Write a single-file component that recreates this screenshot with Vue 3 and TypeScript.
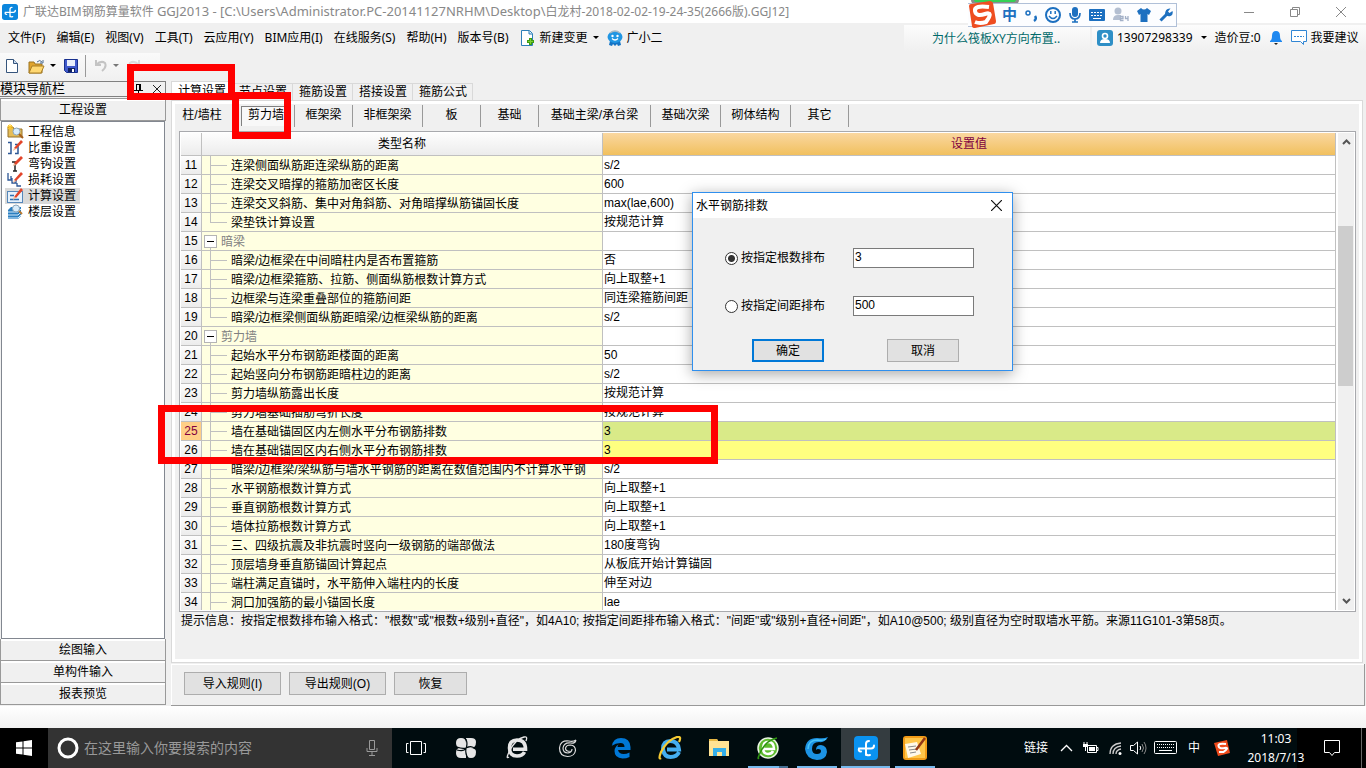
<script setup lang="ts">
import { ref } from 'vue'

interface Row {
  n: number
  name: string
  value: string
  group?: boolean
  last?: boolean
}

const menus = ['文件(F)', '编辑(E)', '视图(V)', '工具(T)', '云应用(Y)', 'BIM应用(I)', '在线服务(S)', '帮助(H)', '版本号(B)']
const navItems = ['工程信息', '比重设置', '弯钩设置', '损耗设置', '计算设置', '楼层设置']
const navSections = ['绘图输入', '单构件输入', '报表预览']
const tabs = ['计算设置', '节点设置', '箍筋设置', '搭接设置', '箍筋公式']
const subTabs = [
  { t: '柱/墙柱', s: 'first' },
  { t: '剪力墙', s: 'pressed' },
  { t: '框架梁', s: 'short' },
  { t: '非框架梁', s: 'mid' },
  { t: '板', s: 'short' },
  { t: '基础', s: 'short' },
  { t: '基础主梁/承台梁', s: 'long' },
  { t: '基础次梁', s: 'mid' },
  { t: '砌体结构', s: 'mid' },
  { t: '其它', s: 'short' },
]
const rows: Row[] = [
  { n: 11, name: '连梁侧面纵筋距连梁纵筋的距离', value: 's/2' },
  { n: 12, name: '连梁交叉暗撑的箍筋加密区长度', value: '600' },
  { n: 13, name: '连梁交叉斜筋、集中对角斜筋、对角暗撑纵筋锚固长度', value: 'max(lae,600)' },
  { n: 14, name: '梁垫铁计算设置', value: '按规范计算', last: true },
  { n: 15, name: '暗梁', value: '', group: true },
  { n: 16, name: '暗梁/边框梁在中间暗柱内是否布置箍筋', value: '否' },
  { n: 17, name: '暗梁/边框梁箍筋、拉筋、侧面纵筋根数计算方式', value: '向上取整+1' },
  { n: 18, name: '边框梁与连梁重叠部位的箍筋间距', value: '同连梁箍筋间距' },
  { n: 19, name: '暗梁/边框梁侧面纵筋距暗梁/边框梁纵筋的距离', value: 's/2', last: true },
  { n: 20, name: '剪力墙', value: '', group: true },
  { n: 21, name: '起始水平分布钢筋距楼面的距离', value: '50' },
  { n: 22, name: '起始竖向分布钢筋距暗柱边的距离', value: 's/2' },
  { n: 23, name: '剪力墙纵筋露出长度', value: '按规范计算' },
  { n: 24, name: '剪力墙基础插筋弯折长度', value: '按规范计算' },
  { n: 25, name: '墙在基础锚固区内左侧水平分布钢筋排数', value: '3' },
  { n: 26, name: '墙在基础锚固区内右侧水平分布钢筋排数', value: '3' },
  { n: 27, name: '暗梁/边框梁/梁纵筋与墙水平钢筋的距离在数值范围内不计算水平钢', value: 's/2' },
  { n: 28, name: '水平钢筋根数计算方式', value: '向上取整+1' },
  { n: 29, name: '垂直钢筋根数计算方式', value: '向上取整+1' },
  { n: 30, name: '墙体拉筋根数计算方式', value: '向上取整+1' },
  { n: 31, name: '三、四级抗震及非抗震时竖向一级钢筋的端部做法', value: '180度弯钩' },
  { n: 32, name: '顶层墙身垂直筋锚固计算起点', value: '从板底开始计算锚固' },
  { n: 33, name: '端柱满足直锚时，水平筋伸入端柱内的长度', value: '伸至对边' },
  { n: 34, name: '洞口加强筋的最小锚固长度', value: 'lae' },
]

const activeNav = ref(4)
const mode = ref('count')
const count = ref('3')
const spacing = ref('500')
const search = ref('')
</script>

<template>
  <div class="app">
    <header class="titlebar">
      <svg class="logo" viewBox="0 0 24 24" width="16" height="16">
        <rect width="24" height="24" rx="4" fill="#0b86dd" />
        <path d="M12 19V8q0-3 3-3M12 12.500h5q3 0 3-3M12 12.500H5q-1 3 2 3M12 17q0 3 4 2" fill="none" stroke="#fff" stroke-width="2" stroke-linecap="round" />
      </svg>
      <span class="title">广联达BIM钢筋算量软件 <span class="path">GGJ2013 - [C:\Users\Administrator.PC-20141127NRHM\Desktop\</span>白龙村-2018-02-02-19-24-35(2666版).GGJ12]</span>
      <div class="winbtns">
        <button aria-label="最小化"><svg width="12" height="12"><path d="M1 6.500h10" stroke="#888" /></svg></button>
        <button aria-label="还原"><svg width="12" height="12"><path d="M1.500 3.500h7v7h-7zM3.500 3V1.500h7v7H9" fill="none" stroke="#888" /></svg></button>
        <button aria-label="关闭"><svg width="12" height="12"><path d="M1 1l10 10M11 1L1 11" stroke="#888" /></svg></button>
      </div>
    </header>

    <nav class="menubar">
      <button v-for="m in menus" :key="m">{{ m }}</button>
      <button class="withicon">
        <svg width="15" height="16"><path d="M1.500.500h8l3 3v12h-11z" fill="#fff" stroke="#2c7fb8" /><path d="M9 1v3h3" fill="#cfe6f7" stroke="#2c7fb8" /><path d="M10.500 8v7M7 11.500h7" stroke="#3e9c10" stroke-width="3" /><path d="M10.500 9v5M8 11.500h5" stroke="#7ccf35" /></svg>
        新建变更
        <svg width="6" height="4"><path d="M0 0h6L3 3z" /></svg>
      </button>
      <button class="withicon helper">
        <svg width="16" height="16"><path d="M3 11l-1 4 3 1 1-2 2 2 2-2 1 2 3-1-1-4" fill="#1473c4" /><ellipse cx="8" cy="7" rx="7.500" ry="6" fill="#2196e3" /><path d="M3 3q5-4 10 0" fill="none" stroke="#a9b9c4" stroke-width="1.500" /><circle cx="5.500" cy="6" r="1.200" fill="#fff" /><circle cx="10.500" cy="6" r="1.200" fill="#fff" /><path d="M5 8.500q3 3 6 0" fill="none" stroke="#fff" stroke-width="1.200" /></svg>
        广小二
      </button>
      <div class="question"><a href="#">为什么筏板XY方向布置..</a></div>
      <div class="account">
        <svg width="16" height="16"><rect width="16" height="16" rx="3" fill="#2e8fc6" /><circle cx="8" cy="6" r="2.500" fill="none" stroke="#fff" stroke-width="1.600" /><path d="M3 13q0-4 5-4t5 4z" fill="#fff" /></svg>
        <span class="phone">13907298339</span>
        <svg width="6" height="4"><path d="M0 0h6L3 3z" /></svg>
        <span class="beans">造价豆:0</span>
        <svg class="bell" width="14" height="16"><path d="M7 1q4 0 4 5 0 4 2 5v1H1v-1q2-1 2-5 0-5 4-5z" fill="#1e88f0" /><path d="M5 13h4l-2 2z" fill="#222" /></svg>
        <svg width="17" height="16"><path d="M.500.500h15v11h-3v3l-3-3h-9z" fill="#fff" stroke="#3186d4" /><path d="M3 6.500h10" stroke="#3186d4" stroke-dasharray="2 1" /></svg>
        <span class="suggest">我要建议</span>
      </div>
    </nav>

    <div class="toolbar">
      <div class="tools">
        <button aria-label="新建"><svg width="12" height="14"><path d="M.500.500h7l4 4v9H.500z" fill="#fff" stroke="#36557c" /><path d="M7.500.500v4h4" fill="#c9dcf0" stroke="#36557c" /></svg></button>
        <button aria-label="打开"><svg width="17" height="15"><path d="M1 14V3h5l1 2h7v9z" fill="#e0a42e" stroke="#9b7422" /><path d="M1 14l3-7h12l-3 7z" fill="#ffd872" stroke="#a97f26" /><path d="M9 3q3-3 5 0m1-2v3h-3" fill="none" stroke="#4c6d93" /></svg></button>
        <svg class="arrow" width="6" height="4"><path d="M0 0h6L3 3z" /></svg>
        <button aria-label="保存" class="save"><svg width="14" height="14"><path d="M.500.500h13v13h-11l-2-2z" fill="#3f59cb" stroke="#18308e" /><path d="M3 1h8v6H3z" fill="#e8eefb" /><path d="M4 9h7v4H4z" fill="#10215f" /><path d="M8 10h2v3H8z" fill="#fff" /></svg></button>
        <i class="sep"></i>
        <button aria-label="撤销"><svg width="14" height="14"><path d="M2 1v5h5M2 6q5-5 9-2 2 4-3 8" fill="none" stroke="#c4c4c4" stroke-width="2" /></svg></button>
        <svg class="arrow" width="6" height="4"><path d="M0 0h6L3 3z" fill="#777" /></svg>
        <button aria-label="重做"><svg width="14" height="14"><path d="M12 1v5H7M12 6Q7 1 3 4q-2 4 3 8" fill="none" stroke="#dadada" stroke-width="2" /></svg></button>
      </div>
    </div>

    <main class="work">
      <aside class="side">
        <div class="sidehead">
          <span>模块导航栏</span>
          <svg class="pin" width="9" height="10"><path d="M2.500 0v6M6 0v6M2 .500h5M0 6.500h9M4.500 7v3" stroke="#000" fill="none" /><path d="M5 1h2v5H5z" /></svg>
          <svg class="x" width="8" height="8"><path d="M0 0l8 8M8 0L0 8" stroke="#222" /></svg>
        </div>
        <button class="section top">工程设置</button>
        <ul class="tree">
          <li v-for="(t, i) in navItems" :key="t">
            <button :class="{ on: i === activeNav }" @click="activeNav = i">
              <svg width="17" height="16">
                <g v-if="i === 0"><path d="M1 13V3h5l1 2h8v8z" fill="#e5bd58" stroke="#94702b" /><path d="M3 0v6M0 3h6M1 1l4 4M5 1L1 5" stroke="#ffc71f" /><circle cx="9.500" cy="7.500" r="3.500" fill="#d7ecfb" stroke="#8aa5bb" /><path d="M12 10l4 4" stroke="#a5601d" stroke-width="2" /></g>
                <g v-else-if="i === 1"><path d="M1 2.500h3v11H1M8 4.500h3v9H8" fill="none" stroke="#2d5796" stroke-width="1.500" /><path d="M7 8L14 0l2 2-7 7z" fill="#e2442a" /><path d="M7 8l-1 3 3-2z" fill="#f3ba96" /></g>
                <g v-else-if="i === 2"><path d="M8 6v9M6 15h4M5 6h5" stroke="#222" stroke-width="1.500" /><path d="M7 7L14 0l2 2-7 7z" fill="#e2442a" /><path d="M7 7l-1 3 3-1z" fill="#f3ba96" /></g>
                <g v-else-if="i === 3"><path d="M1 1v7h3V4M5 6v5h4V7M10 11v3h4" fill="none" stroke="#2d5796" stroke-width="1.300" /><path d="M7 8L14 0l2 2-7 7z" fill="#e2442a" /><path d="M7 8l-1 3 3-2z" fill="#f3ba96" /></g>
                <g v-else-if="i === 4"><rect x=".500" y="3.500" width="15" height="11" fill="#e6f1fc" stroke="#5587ba" /><path d="M3 7.500h4M3 11.500h9" stroke="#2f6fb0" stroke-width="1.500" /><path d="M7 9L14 0l2 2-7 8z" fill="#e2442a" /><path d="M7 8l-1 4 3-2z" fill="#f3ba96" /></g>
                <g v-else><path d="M1 6l3-3h10v9l-3 3H1z" fill="#2c7fc0" /><path d="M1 8h10l3-3M1 11h10l3-3M1 14h10l3-3" fill="none" stroke="#d4ecfd" /><circle cx="9" cy="4.500" r="3.500" fill="#d7ecfb" stroke="#8aa5bb" /><path d="M12 7l3 3" stroke="#b77a34" stroke-width="2" /></g>
              </svg>
              <span>{{ t }}</span>
            </button>
          </li>
        </ul>
        <button v-for="s in navSections" :key="s" class="section">{{ s }}</button>
      </aside>

      <section class="content">
        <div class="tabs">
          <button v-for="(t, i) in tabs" :key="t" :class="{ on: i === 0 }">{{ t }}</button>
        </div>
        <div class="panel">
          <div class="subtabs">
            <button v-for="s in subTabs" :key="s.t" :class="s.s"><span>{{ s.t }}</span></button>
          </div>
          <div class="gridbox">
            <div class="gridscroll">
              <table>
                <colgroup><col class="c1" /><col class="c2" /><col /></colgroup>
                <thead>
                  <tr><th></th><th>类型名称</th><th class="hot">设置值</th></tr>
                </thead>
                <tbody>
                  <tr v-for="r in rows" :key="r.n" :class="{ cur: r.n === 25, mark: r.n === 26 }">
                    <th scope="row">{{ r.n }}</th>
                    <td class="name">
                      <div class="cell" :class="{ group: r.group }">
                        <span v-if="r.group" class="box"></span>
                        <span v-else class="branch" :class="{ last: r.last }"></span>
                        <span class="txt">{{ r.name }}</span>
                      </div>
                    </td>
                    <td class="val">{{ r.value }}</td>
                  </tr>
                </tbody>
              </table>
            </div>
            <div class="scroll">
              <svg width="9" height="6"><path d="M1 5l3.500-3.500L8 5" fill="none" stroke="#555" stroke-width="2" /></svg>
              <div class="track"><div class="thumb"></div></div>
              <svg width="9" height="6"><path d="M1 1l3.500 3.500L8 1" fill="none" stroke="#555" stroke-width="2" /></svg>
            </div>
          </div>
          <p class="hint">提示信息：按指定根数排布输入格式："根数"或"根数+级别+直径"，如4A10; 按指定间距排布输入格式："间距"或"级别+直径+间距"，如A10@500; 级别直径为空时取墙水平筋。来源11G101-3第58页。</p>
        </div>
        <div class="actions">
          <button class="wide">导入规则(I)</button>
          <button class="wide">导出规则(O)</button>
          <button class="narrow">恢复</button>
        </div>
      </section>
    </main>
    <div class="status"></div>

    <footer class="taskbar">
      <button class="start" aria-label="开始"><svg width="16" height="16"><path d="M0 2.300l6.500-.900v6.100H0zM7.500 1.200L16 0v7.500H7.500zM0 8.500h6.500v6.100L0 13.700zM7.500 8.500H16V16l-8.500-1.200z" fill="#fff" /></svg></button>
      <div class="search">
        <svg width="22" height="22"><circle cx="11" cy="11" r="9" fill="none" stroke="#fff" stroke-width="3" /></svg>
        <input v-model="search" aria-label="搜索" placeholder="在这里输入你要搜索的内容" />
        <svg width="12" height="16"><path d="M3.500.500h5v9h-5zM1 8v3.500h10V8M6 12v3M3 15.500h6" fill="none" stroke="#9a9a9a" /></svg>
      </div>
      <button class="tview" aria-label="任务视图"><svg width="20" height="14"><path d="M4.500.500h11v13h-11zM2.500 2.500h-2v9h2M17.500 2.500h2v9h-2" fill="none" stroke="#fff" /></svg></button>
      <div class="pinned">
        <button aria-label="应用"><svg width="22" height="22" viewBox="0 0 22 22"><g fill="#e6e6e6"><path d="M1 6q0-5 5-5 5 0 5 5v5H6Q1 11 1 6z" /><path d="M11 1h5q5 0 5 4 0 6-5 6-5 0-5-5z" /><path d="M21 15q0 6-5 6-5 0-5-6v-4h5q5 0 5 4z" /><path d="M11 21H6q-5 0-5-5 0-5 4-5h6z" /></g><path d="M2 10q5 2 9 1 2-3 0-9M11 11q6-3 9 1M11 11q-1 6 2 10M11 11q-2 4-9 2" fill="none" stroke="#000c0f" stroke-width="1.200" /></svg></button>
        <button aria-label="浏览器"><svg width="22" height="24" viewBox="0 0 22 24"><path d="M18.500 16q-2 4-7.500 4-7.500 0-7.500-8T11 4q8.500 0 8.500 9.200H7" fill="none" stroke="#e6e6e6" stroke-width="3.600" /><path d="M3 21Q-1 24 4 14 10 3 18 1q4-1 2 4" fill="none" stroke="#e6e6e6" stroke-width="1.300" /></svg></button>
        <button aria-label="G"><svg width="20" height="20" viewBox="0 0 20 20"><path d="M18 2q-3 2-7 1Q2 2 1.500 10q0 8 8 8.500 7 0 8-6 0-5-5-5.500-5 0-5 4 1 3 4 2M18 2q-1 4-5 3-7-1-8 5 0 5 5 5 4-1 4-4" fill="none" stroke="#ddd" stroke-width="1.200" /></svg></button>
      </div>
      <div class="running">
        <button aria-label="Edge"><svg width="20" height="22" viewBox="0 0 20 22"><path d="M1 9Q2 1 10 1q9 0 9.500 9v3H7q1 4 5.500 4 3 0 6-1.500V20q-3 1.500-7 1.500-8-.500-8-7.500 0-4 4-6.500-1 1-1 2.500h7q0-4-4-4-5 0-9 3z" fill="#0078d7" /></svg></button>
        <button aria-label="Internet Explorer"><svg width="24" height="24" viewBox="0 0 24 24"><path d="M21 16q-2 5-8.500 5T5 13q0-8 7.500-8T21 13.500H9" fill="none" stroke="#45aef0" stroke-width="4" /><path d="M3 22Q0 24 3 16 9 4 19 1q5-1 2 5" fill="none" stroke="#f5ca32" stroke-width="2.200" /></svg></button>
        <button aria-label="文件资源管理器"><svg width="22" height="20" viewBox="0 0 22 20"><path d="M1 1h8l1 2h11v15H1z" fill="#ffe394" /><path d="M1 1h8l1 2H1z" fill="#e7b844" /><path d="M5 10h13v8h-4v-4H9v4H5z" fill="#35aee8" /></svg></button>
        <button class="run split" aria-label="360"><svg width="22" height="24" viewBox="0 0 22 24"><circle cx="11" cy="12" r="10" fill="#5dbb2e" stroke="#e9f5e3" stroke-width="1.500" /><path d="M16 15q-1 3-5 3-5 0-5-6t5-6q6 0 6 7H7" fill="none" stroke="#fff" stroke-width="2.500" /><path d="M2 22Q0 24 3 17 9 4 20 2" fill="none" stroke="#2d9410" stroke-width="1.600" /></svg></button>
        <button class="run" aria-label="广联达"><svg width="24" height="24" viewBox="0 0 24 24"><path d="M23 1q-3 6-9 5-7 0-7 7 0 5 5 5 4 0 4-3 0-2-3-2-1 0-2 1 0-5 5-5 6 1 6 7-1 8-10 8Q1 23 0 13 1 2 12 2q7 1 11-1z" fill="#1c93e4" /><path d="M21 3q-3 2-8 1Q3 4 3 13" fill="none" stroke="#48c3f7" stroke-width="1.500" /></svg></button>
        <button class="run act" aria-label="GGJ"><svg width="24" height="24" viewBox="0 0 24 24"><rect width="24" height="24" rx="4" fill="#0a92f0" /><path d="M12 19V8q0-3 3-3M12 12.500h5q3 0 3-3M12 12.500H5q-1 3 2 3M12 17q0 3 4 2" fill="none" stroke="#fff" stroke-width="2" stroke-linecap="round" /></svg></button>
        <button class="run" aria-label="便笺"><svg width="24" height="24" viewBox="0 0 24 24"><rect width="24" height="24" rx="3" fill="#f29c18" /><rect x="2" y="2" width="20" height="20" fill="#ffc64a" /><path d="M2 8l12-2 4 12-13 4z" fill="#fff8e8" /><path d="M5 11l8-1M6 14l8-1M7 17l6-1" stroke="#8a8a8a" /><path d="M22 2l-9 12" stroke="#943715" stroke-width="2.500" /></svg></button>
      </div>
      <div class="tray">
        <span>链接</span>
        <svg class="t1" width="13" height="8"><path d="M1 7l5.500-5.500L12 7" fill="none" stroke="#fff" stroke-width="1.300" /></svg>
        <svg class="t2" width="17" height="12"><path d="M5.500 3.500h9v7h-9zM15 5.500h1v3h-1M1 3h5M2 0v3M5 0v3M3.500 4v5" fill="none" stroke="#fff" /><path d="M7 5h6v4H7zM1 2h5v3H1z" fill="#fff" /></svg>
        <svg class="t3" width="13" height="13"><circle cx="11" cy="11.500" r="1.500" fill="#fff" /><path d="M7 12q0-4 5-5M4 12q0-7 8-8M1 12Q1 2 12 1" fill="none" stroke="#ccc" stroke-width="1.300" /></svg>
        <svg class="t4" width="18" height="14"><path d="M.500 4.500h3l4-3.500v12l-4-3.500h-3zM10 5q1.500 2 0 4" fill="none" stroke="#fff" /><path d="M12 3q3 4 0 8M14 1q4 6 0 12" fill="none" stroke="#888" /></svg>
        <svg class="t5" width="23" height="14"><rect x=".500" y=".500" width="22" height="12" rx="1" fill="none" stroke="#fff" /><path d="M3 3.500h17M3 6.500h17" stroke="#fff" stroke-dasharray="1 1" /><path d="M5 9.500h13" stroke="#fff" /></svg>
        <span class="zh">中</span>
        <svg class="t6" width="16" height="16" viewBox="0 0 16 16"><path d="M0 3l13-3 3 13-12 3z" fill="#ee4b1c" /><path d="M12 4Q4 3 4.500 6t6 2-1 4H5" fill="none" stroke="#fff" stroke-width="2" /></svg>
        <div class="clock"><span>11:03</span><span>2018/7/13</span></div>
        <svg class="note" width="17" height="17"><path d="M.500.500h15v12h-5l-2.500 3-2.500-3h-5z" fill="none" stroke="#fff" /></svg>
        <i class="edge"></i>
      </div>
    </footer>

    <div class="ball"></div>
    <div class="ime">
      <svg class="sg" width="28" height="28" viewBox="0 0 28 28"><path d="M1 5q0-2 2-2l19-3q2 0 3 2l3 18q0 3-2 3L7 27q-3 0-3-2z" fill="#ee4d20" /><path d="M21 6Q6 4 7 10t10 3 1 8q-6 2-11 0" fill="none" stroke="#fff" stroke-width="4" /></svg>
      <span class="zhong">中</span>
      <svg width="12" height="14"><circle cx="3" cy="5" r="2" fill="none" stroke="#1d70c0" stroke-width="1.500" /><path d="M10 8q2 3-1 5" fill="none" stroke="#1d70c0" stroke-width="2.500" /></svg>
      <svg width="16" height="16"><circle cx="8" cy="8" r="7" fill="none" stroke="#1d70c0" stroke-width="2" /><path d="M5.800 4v3M10.200 4v3M4 9q4 5 8 0" fill="none" stroke="#1d70c0" stroke-width="1.500" /></svg>
      <svg width="12" height="16"><rect x="3" width="6" height="10" rx="3" fill="#1d70c0" /><path d="M1 6q0 6 5 6t5-6M6 12v3M3 15h6" fill="none" stroke="#1d70c0" stroke-width="1.700" /></svg>
      <svg width="16" height="12"><rect width="16" height="12" rx="1" fill="#1d70c0" /><path d="M2 3.500h12M2 6.500h12" stroke="#fff" stroke-dasharray="2 1" /><path d="M4 9.500h8" stroke="#fff" /></svg>
      <svg width="16" height="16"><circle cx="5" cy="4" r="3.500" fill="#b4bfd1" /><path d="M0 13q0-5 5-5h3v5z" fill="#b4bfd1" /><path d="M7 9.500h3v2H7.500v2h3M12.500 9v2.500H15M15 9v5" fill="none" stroke="#a2b0c7" stroke-width="1.300" /></svg>
      <svg width="14" height="14"><path d="M4 0q3 3 6 0l4 3-2 4-1.500-1V14h-7V6L2 7 0 3z" fill="#1d70c0" /></svg>
      <svg width="14" height="14"><path d="M1.500 12.500l7-7" stroke="#1d70c0" stroke-width="3" /><path d="M11.500.500L9 3.500l1.500 1.500 3-2q1 4-2 5T6 6.500Q6 0 11.500.500z" fill="#1d70c0" /></svg>
    </div>

    <form class="dialog" role="dialog" aria-labelledby="dlg-title" @submit.prevent>
      <div class="dhead">
        <span id="dlg-title">水平钢筋排数</span>
        <button type="button" aria-label="关闭"><svg width="11" height="11"><path d="M0 0l11 11M11 0L0 11" stroke="#111" stroke-width="1.200" /></svg></button>
      </div>
      <div class="dbody">
        <label><input v-model="mode" type="radio" name="mode" value="count" />按指定根数排布</label>
        <input v-model="count" class="field" type="text" aria-label="按指定根数排布" />
        <label><input v-model="mode" type="radio" name="mode" value="spacing" />按指定间距排布</label>
        <input v-model="spacing" class="field" type="text" aria-label="按指定间距排布" />
      </div>
      <div class="dfoot">
        <button class="ok">确定</button>
        <button type="button">取消</button>
      </div>
    </form>

    <div class="frame f1"></div>
    <div class="frame f2"></div>
    <div class="frame f3"></div>
  </div>
</template>

<style>
body {
  margin: 0;
  overflow: hidden;
}
</style>

<style scoped>
.app {
  position: relative;
  display: flex;
  flex-direction: column;
  height: 100vh;
  background: #f0f0f0;
  color: #000;
  font: 12px/16px 'Liberation Sans', 'Noto Sans CJK SC', sans-serif;
  white-space: nowrap;
}
.app * {
  box-sizing: border-box;
}
button {
  margin: 0;
  padding: 0;
  border: 0;
  background: none;
  color: inherit;
  font: inherit;
  white-space: nowrap;
}
svg {
  flex: none;
}
.titlebar,
.menubar,
.taskbar {
  font-family: 'Noto Sans', 'Noto Sans CJK SC', sans-serif;
}
.titlebar {
  flex: none;
  display: flex;
  align-items: center;
  height: 23px;
  padding-left: 2px;
  background: #fff;
  color: #888;
}
.title {
  flex: 1;
  min-width: 0;
  overflow: hidden;
  margin-left: 5px;
}
.path {
  font-size: 13px;
}
.winbtns {
  display: flex;
  padding-right: 2px;
}
.winbtns button {
  display: flex;
  justify-content: center;
  width: 46px;
}
.menubar {
  flex: none;
  display: flex;
  align-items: center;
  height: 28px;
  padding: 2px 0 0 8px;
}
.menubar button {
  margin-right: 11px;
}
.menubar .withicon {
  display: flex;
  align-items: center;
  gap: 5px;
  margin-right: 8px;
}
.menubar .helper {
  gap: 4px;
}
.question {
  width: 188px;
  height: 26px;
  margin-left: auto;
  padding: 6px 0 0 28px;
  border-right: 2px solid #f0f0f0;
  background: linear-gradient(#fcfcfc, #f0f0f0);
}
.question a {
  color: #006a6a;
  text-decoration: none;
}
.account {
  display: flex;
  align-items: center;
  width: 274px;
  height: 26px;
  padding-left: 5px;
  background: linear-gradient(#fcfcfc, #f0f0f0);
}
.phone {
  margin: 0 8px 0 4px;
}
.beans {
  margin: 0 8px;
}
.bell {
  margin-right: 8px;
}
.suggest {
  margin-left: 3px;
}
.toolbar {
  flex: none;
  display: flex;
  height: 30px;
}
.tools {
  display: flex;
  align-items: center;
  width: 160px;
  margin-top: 2px;
  padding: 0 0 2px 6px;
  background: linear-gradient(#fafafa, #f0f0f0);
}
.tools button {
  display: flex;
  margin-right: 10px;
}
.tools button + .arrow {
  margin: 0 8px 0 -5px;
}
.tools .save {
  margin-right: 7px;
}
.sep {
  width: 1px;
  height: 22px;
  margin-right: 8px;
  background: #999;
}
.work {
  flex: 1;
  display: flex;
  min-height: 0;
}
.side {
  display: flex;
  flex-direction: column;
  flex: none;
  width: 166px;
}
.sidehead {
  display: flex;
  align-items: center;
  height: 16px;
  margin-bottom: 1px;
  padding-right: 4px;
  border: solid #808080;
  border-width: 1px 1px 1px 0;
  font-size: 13px;
}
.pin {
  margin-left: auto;
}
.x {
  margin-left: 10px;
}
.section {
  flex: none;
  height: 22px;
  border: solid #999;
  border-width: 0 1px 1px;
  box-shadow: inset 0 2px #fff;
}
.section.top {
  height: 23px;
  border-top-width: 1px;
}
.tree {
  flex: 1;
  min-height: 0;
  margin: 0 1px;
  padding: 2px 3px;
  border: 1px solid #828790;
  background: #fff;
  list-style: none;
}
.tree li {
  height: 16px;
}
.tree button {
  display: flex;
  height: 16px;
  padding: 0 4px 0 2px;
  line-height: 16px;
  gap: 4px;
}
.tree .on {
  background: #d9d9d9;
}
.section:last-child {
  margin-bottom: 1px;
}
.content {
  flex: 1;
  display: flex;
  flex-direction: column;
  min-width: 0;
  margin-left: 5px;
  padding-right: 1px;
}
.tabs {
  display: flex;
  flex: none;
  align-items: flex-end;
  height: 19px;
}
.tabs button {
  width: 60px;
  height: 17px;
  padding-left: 1px;
  border: solid #d9d9d9;
  border-width: 1px 1px 0 0;
}
.tabs .on {
  width: 62px;
  height: 19px;
  padding: 0;
  border-left-width: 1px;
  background: #fff;
}
.panel {
  flex: 1;
  display: flex;
  flex-direction: column;
  min-height: 0;
  margin-right: 2px;
  border: 1px solid #d9d9d9;
  box-shadow: inset 0 0 0 3px #fff;
  padding: 4px 6px 2px 7px;
}
.subtabs {
  flex: none;
  display: flex;
  height: 22px;
  margin: 0 0 4px -6px;
}
.subtabs button {
  padding-bottom: 2px;
  border-right: 1px solid #999;
}
.subtabs .first {
  width: 62px;
  padding-right: 4px;
  border: 0;
}
.subtabs .pressed {
  width: 60px;
  padding: 0 4px 0 6px;
}
.pressed span {
  display: block;
  height: 20px;
  border: solid #808080;
  border-width: 1px 0 0 1px;
  background: #f8f8f8;
}
.subtabs .short {
  width: 58px;
}
.subtabs .mid {
  width: 70px;
}
.subtabs .long {
  width: 112px;
}
.gridbox {
  flex: 1;
  display: flex;
  min-height: 0;
  padding: 1px;
  border: 1px solid #a8a9ad;
  background: #fff;
}
.gridscroll {
  flex: 1;
  min-width: 0;
  overflow: hidden;
}
table {
  width: 100%;
  table-layout: fixed;
  border-collapse: separate;
  border-spacing: 0;
}
.c1 {
  width: 21px;
}
.c2 {
  width: 401px;
}
th,
td {
  height: 19px;
  padding: 0;
  border: solid #c0c0c0;
  border-width: 0 1px 1px 0;
  font-weight: normal;
  line-height: 18px;
}
th {
  background: linear-gradient(#fdfdfd, #ececec);
}
thead th {
  height: 23px;
  line-height: 22px;
}
.hot {
  background: linear-gradient(#fad7a0, #f1c05e);
  color: #800040;
}
.name {
  background: #ffffe1;
}
.cell {
  display: flex;
  height: 18px;
  padding-left: 8px;
  overflow: hidden;
}
.group {
  padding-left: 2px;
  color: #808080;
  background: linear-gradient(#c0c0c0, #c0c0c0) 8px 100% / 1px 4px no-repeat;
}
.branch {
  flex: none;
  width: 17px;
  margin-right: 4px;
  background: linear-gradient(#c0c0c0, #c0c0c0) 0 0 / 1px 100% no-repeat, linear-gradient(#c0c0c0, #c0c0c0) 0 9px / 100% 1px no-repeat;
}
.branch.last {
  background-size: 1px 9px, 100% 1px;
}
.box {
  flex: none;
  width: 13px;
  height: 13px;
  margin: 3px 4px 0 0;
  border: 1px solid #b4b4b4;
  background: linear-gradient(#000, #000) 50% 50% / 7px 1px no-repeat #fff;
}
.txt {
  line-height: 21px;
}
.val {
  padding-left: 1px;
  background: #fff;
}
.cur th {
  background: #ffcf87;
  color: #800040;
}
.cur .val {
  background: #d9ea88;
}
.mark .val {
  background: #ffff80;
}
.scroll {
  flex: none;
  display: flex;
  flex-direction: column;
  align-items: center;
  width: 16px;
  margin-left: 2px;
  padding: 6px 0;
  background: #f0f0f0;
}
.track {
  flex: 1;
  width: 100%;
  padding-top: 81px;
}
.thumb {
  width: 15px;
  height: 43%;
  background: #cdcdcd;
}
.track {
  display: flex;
  flex-direction: column;
}
.thumb {
  flex: none;
}
.hint {
  flex: none;
  height: 48px;
  margin: 0;
  padding: 1px 0 0 2px;
  overflow: hidden;
}
.actions {
  flex: none;
  display: flex;
  gap: 8px;
  height: 42px;
  margin-top: 1px;
  padding: 8px 13px 0;
  border: solid #999;
  border-width: 0 1px 1px 0;
  box-shadow: inset 1px 1px #fff;
}
.actions button,
.dfoot button {
  height: 23px;
  border: 1px solid #adadad;
  background: #e1e1e1;
}
.actions .wide {
  width: 97px;
}
.actions .narrow {
  width: 73px;
}
.status {
  flex: none;
  height: 22px;
  background: linear-gradient(#fff, #f2f2f2);
}
.taskbar {
  flex: none;
  display: flex;
  height: 40px;
  background: #000c0f;
  color: #fff;
}
.taskbar button {
  display: flex;
  align-items: center;
  justify-content: center;
}
.start,
.tview {
  width: 48px;
}
.start {
  background: #000;
}
.search {
  display: flex;
  align-items: center;
  width: 344px;
  padding: 0 14px 0 9px;
  background: #333;
}
.search input {
  flex: 1;
  min-width: 0;
  margin-left: 5px;
  padding: 0;
  border: 0;
  outline: 0;
  background: none;
  color: #fff;
  font: 14px/20px 'Noto Sans', 'Noto Sans CJK SC', sans-serif;
}
.search input::placeholder {
  color: #999;
  opacity: 1;
}
.pinned,
.running {
  display: flex;
}
.pinned button {
  width: 51px;
}
.running {
  margin-left: 3px;
}
.running button {
  width: 49px;
  background: linear-gradient(#76b9ed, #76b9ed) 50% 100% / 0 2px no-repeat;
}
.running .run {
  background-size: 40px 2px;
}
.running .split {
  background: linear-gradient(90deg, #76b9ed 31px, #456f93 31px) 50% 100% / 40px 2px no-repeat;
}
.running .act {
  background-color: #343c40;
  background-size: 49px 2px;
}
.tray {
  display: flex;
  align-items: center;
  margin-left: auto;
  background: linear-gradient(#000, #000) 100% 0 / 69px 100% no-repeat;
}
.t1 {
  margin-left: 12px;
}
.t2 {
  margin-left: 9px;
}
.t3 {
  margin-left: 10px;
}
.t4 {
  margin-left: 8px;
}
.t5 {
  margin-left: 6px;
}
.zh {
  margin-left: 11px;
}
.t6 {
  margin-left: 14px;
}
.clock {
  display: flex;
  flex-direction: column;
  align-items: center;
  width: 60px;
  margin-left: 16px;
  line-height: 19px;
}
.note {
  margin-left: 18px;
}
.edge {
  width: 1px;
  height: 40px;
  margin: 0 4px 0 20px;
  background: #666;
}
.ball {
  position: absolute;
  top: 0;
  left: 971px;
  width: 48px;
  height: 5px;
  border: 3px solid #8b8b8b;
  border-top: 0;
  border-radius: 0 0 10px 10px;
  background: #35d055;
}
.ime {
  position: absolute;
  top: 3px;
  left: 968px;
  display: flex;
  align-items: center;
  gap: 8px;
  height: 24px;
  padding-right: 3px;
  border: 1px solid #b0c0d8;
  border-left: 0;
  background: #fcfdff;
}
.ime .sg {
  margin-right: -2px;
}
.zhong {
  color: #1d70c0;
  font-size: 15px;
  font-weight: bold;
}
.dialog {
  position: absolute;
  top: 192px;
  left: 692px;
  width: 321px;
  border: 1px solid #2f8fee;
  background: #f0f0f0;
  box-shadow: 0 3px 14px rgba(0, 0, 0, 0.35);
}
.dhead {
  display: flex;
  align-items: center;
  justify-content: space-between;
  height: 25px;
  padding: 0 10px 0 3px;
  background: #fff;
}
.dhead button {
  display: flex;
}
.dbody {
  display: grid;
  grid-template-columns: 128px 121px;
  row-gap: 28px;
  padding: 30px 0 23px 32px;
}
.dbody label {
  display: flex;
  align-items: center;
  gap: 3px;
  line-height: 18px;
}
.dbody input[type='radio'] {
  appearance: none;
  width: 13px;
  height: 13px;
  margin: 0;
  border: 1px solid #333;
  border-radius: 50%;
  background: #fff;
}
.dbody input[type='radio']:checked {
  background: radial-gradient(circle, #333 3px, #fff 4px);
}
.field {
  height: 20px;
  padding: 0 1px 2px;
  border: 1px solid #7a7a7a;
  border-radius: 0;
  background: #fff;
  color: #000;
  font: inherit;
}
.dfoot {
  display: flex;
  gap: 63px;
  padding: 0 0 8px 59px;
}
.dfoot button {
  width: 72px;
}
.dfoot .ok {
  border: 2px solid #0078d7;
}
.frame {
  position: absolute;
  border: 7px solid #f00;
  pointer-events: none;
}
.f1 {
  top: 64px;
  left: 127px;
  width: 108px;
  height: 36px;
}
.f2 {
  top: 92px;
  left: 232px;
  width: 59px;
  height: 47px;
}
.f3 {
  top: 405px;
  left: 158px;
  width: 560px;
  height: 59px;
}
</style>
